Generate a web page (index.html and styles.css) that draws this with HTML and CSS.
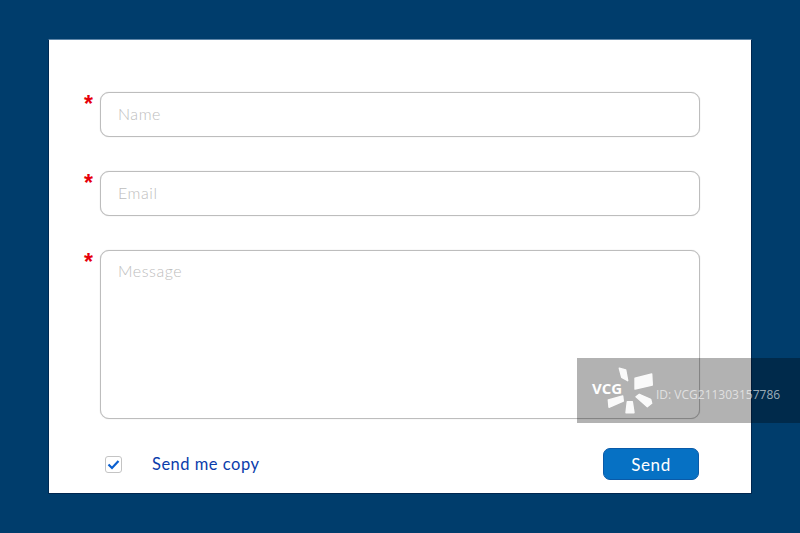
FILE: index.html
```html
<!DOCTYPE html>
<html lang="en">
<head>
<meta charset="utf-8">
<title>Contact form</title>
<link rel="stylesheet" href="styles.css">
</head>
<body>
<main class="card">
  <form class="form">
    <div class="row"><span class="star">*</span><input class="field" type="text" placeholder="Name"></div>
    <div class="row"><span class="star">*</span><input class="field" type="text" placeholder="Email"></div>
    <div class="row"><span class="star">*</span><textarea class="field area" placeholder="Message"></textarea></div>
    <div class="actions">
      <label class="copy">
        <span class="check"><svg width="13" height="11" viewBox="0 0 13 11"><path d="M1.5 5.5 L5 9 L11.5 2" fill="none" stroke="#0a5fd0" stroke-width="2.2"/></svg></span>
        <span class="copy-text">Send me copy</span>
      </label>
      <button class="send" type="button">Send</button>
    </div>
  </form>
</main>
<div class="watermark">
  <svg class="wm-logo" width="80" height="65" viewBox="0 0 80 65">
    <g class="wm-mark">
      <polygon points="42.3,10.3 48.7,12 50.7,22.7 44.7,19.3"/>
      <polygon points="58,20.3 74.7,16 75.3,27 58,31"/>
      <polygon points="59,38.7 62.3,36.3 73.7,41.3 74.7,45.3 70.3,48.7"/>
      <polygon points="50.3,43.7 55.3,43.7 57,54.7 49,54.7"/>
      <polygon points="31.3,42 45.7,38 46.3,43 32,49.3"/>
    </g>
    <text class="wm-vcg" x="15" y="36">VCG</text>
  </svg>
  <span class="wm-id">ID: VCG211303157786</span>
</div>
</body>
</html>
```
FILE: styles.css
```css
* { box-sizing: border-box; }
html, body { margin: 0; height: 533px; }
body {
  position: relative;
  overflow: hidden;
  padding: 39px 48px 39px;
  background: #003d6c;
  font-family: Lato, "Open Sans", sans-serif;
}
.card {
  height: 455px;
  background: #fff;
  border: 1px solid #00264f;
  border-top-color: #5f86a8;
  border-left-color: #002a52;
  padding-top: 52px;
}
.form {
  display: flex;
  flex-direction: column;
  gap: 34px;
}
.row {
  display: grid;
  grid-template-columns: 44px 600px;
  column-gap: 7px;
}
.star {
  justify-self: end;
  color: #e6000a;
  font: 700 23px/25px "Liberation Sans", sans-serif;
}
.field {
  display: block;
  width: 600px;
  height: 45px;
  padding: 0 17px 2px;
  border: 1px solid #bdbdbd;
  border-radius: 9px;
  background: #fff;
  box-shadow: 0 0 1px rgba(0, 0, 0, .25);
  font: 300 16px Lato, sans-serif;
  letter-spacing: .55px;
  outline: none;
  resize: none;
}
.field::placeholder { color: #bdbdbd; opacity: 1; }
.area {
  height: 169px;
  padding-top: 10px;
}
.actions {
  display: flex;
  align-items: center;
  justify-content: space-between;
  height: 32px;
  margin-top: -5px;
  padding: 0 52px 0 56px;
}
.copy {
  display: flex;
  align-items: center;
  gap: 30px;
}
.check {
  display: flex;
  align-items: center;
  justify-content: center;
  width: 17px;
  height: 17px;
  border: 1px solid #c4c4c4;
  border-radius: 3px;
}
.copy-text {
  color: #0a3cab;
  font-size: 16.5px;
  letter-spacing: .5px;
}
.send {
  width: 96px;
  height: 32px;
  padding: 0;
  border: 1px solid #0a5aa8;
  border-radius: 7px;
  background: #0671c4;
  color: #fff;
  font: 400 17px Lato, sans-serif;
  letter-spacing: .6px;
}
.watermark {
  position: absolute;
  left: 577px;
  top: 358px;
  display: flex;
  align-items: center;
  width: 223px;
  height: 65px;
  background: rgba(0, 0, 0, .3);
}
.wm-logo { flex: none; margin-right: -1px; }
.wm-mark {
  fill: #fff;
  stroke: #fff;
  stroke-width: 1.4;
  stroke-linejoin: round;
  opacity: .94;
}
.wm-vcg { fill: #fff; font: 700 15px "Open Sans", sans-serif; }
.wm-id {
  margin-top: 8px;
  color: rgba(255, 255, 255, .62);
  font: 400 12px "Open Sans", sans-serif;
  white-space: nowrap;
}
```
